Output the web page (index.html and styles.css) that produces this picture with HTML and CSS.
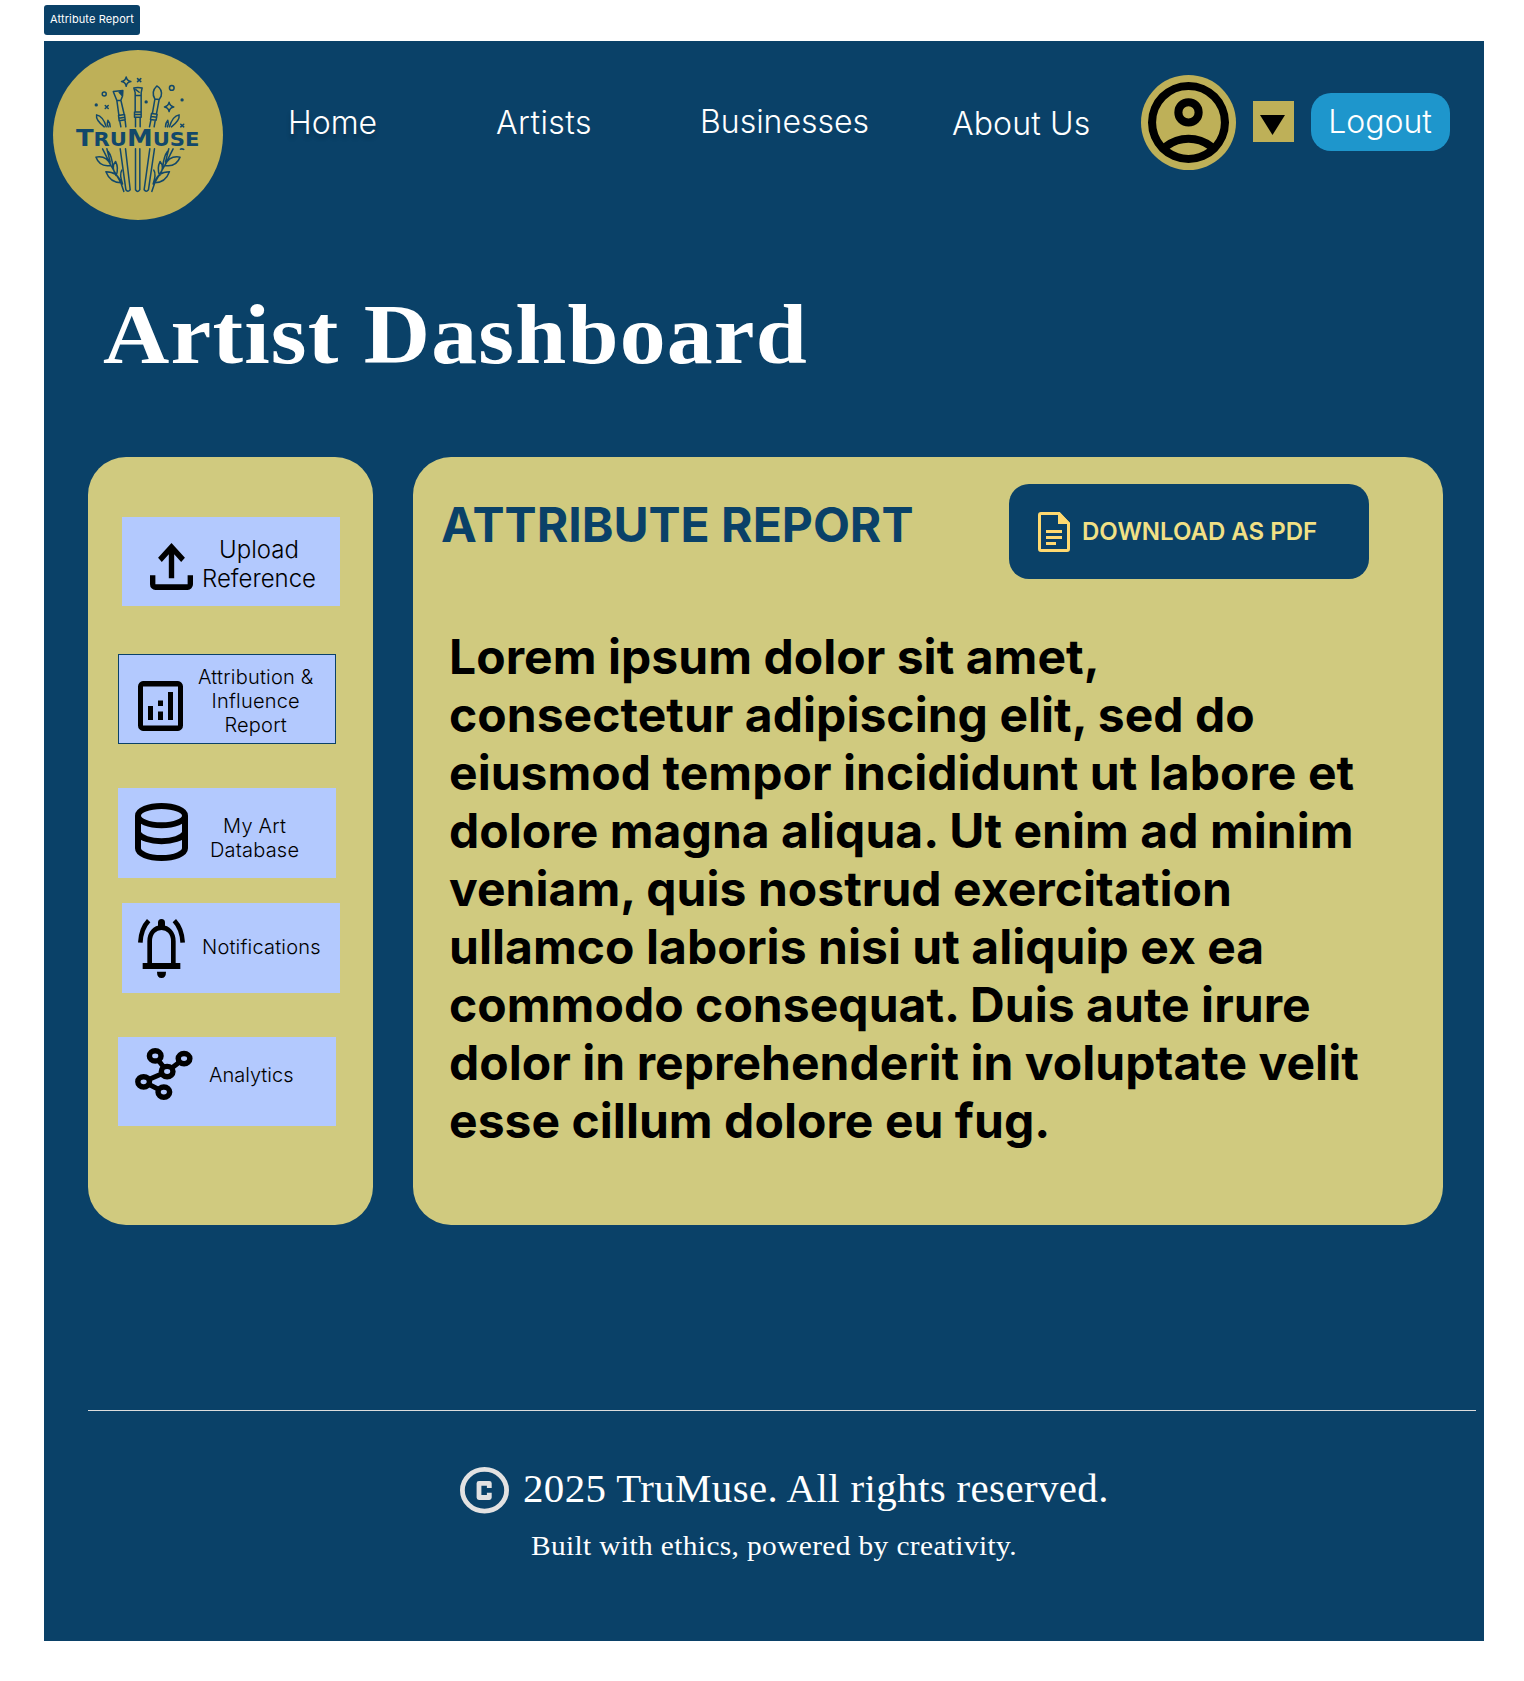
FILE: index.html
```html
<!DOCTYPE html>
<html lang="en">
<head>
<meta charset="utf-8">
<title>TruMuse – Artist Dashboard</title>
<link rel="stylesheet" href="styles.css">
</head>
<body>
<div class="tag">Attribute Report</div>
<div class="page">
  <header class="header">
    <svg class="logo" viewBox="69 149 511 511" role="img" aria-label="TruMuse">
      <circle cx="324.5" cy="404.500" r="255.500" fill="#beb058"/>
      <g fill="none" stroke="#12486a" stroke-width="4.500" stroke-linejoin="round" stroke-linecap="round">
        <!-- stars, dots and crosses -->
        <path d="M289 230q2 12 14 14q-12 2-14 14q-2-12-14-14q12-2 14-14zM418 306q2 12 14 14q-12 2-14 14q-2-12-14-14q12-2 14-14z"/>
        <path d="M323 235l10 9m0-9l-10 9M226 316l9 9m0-9l-9 9M453 372l9 8m0-8l-9 8M452 447q5-2 10 1"/>
        <circle cx="223" cy="281" r="6"/><circle cx="426" cy="263" r="7"/>
        <g fill="#12486a" stroke="none"><circle cx="199" cy="314" r="5"/><circle cx="349" cy="305" r="5"/><circle cx="457" cy="299" r="5"/></g>
        <!-- flat brush -->
        <path d="M250 274l29-3l-1 16l-5 13l-12 1zM261 301l6 44m6-45l10 43M266 346l18-3l2 16l-18 3zM267 354l18-3M270 364l3 16m13-18l2 18"/>
        <path d="M268 276l8-3v12z" fill="#12486a"/>
        <!-- square brush -->
        <path d="M312 263q12-3 25 0l-3 14v9h-18v-9zM316 286v49m18-49v49M314 335h20v16h-20zM314 343h20M317 353v27m14-27v27M318 268l10 8"/>
        <!-- round brush -->
        <path d="M375 296q-12-22 6-39q18 10 13 31l-6 10zM375 298l-7 41m20-41l-8 43M365 340l17 2l-3 18l-17-2zM364 349l17 2M363 361l-4 19m17-18l-3 18"/>
        <!-- handles -->
        <path d="M271 446l17 123q6 9 13 0l-14-123M317 446v123q7 10 13 0v-123M360 446l-17 123q6 9 13 0l18-123"/>
        <!-- left sprig -->
        <path d="M241 380q-1-14-7-20q-4 10 1 20M223 380q-26-20-23-36q20 4 29 36M218 446l25 50l30 52l9 26M231 446l10 40M243 496q-34 6-45-25q32-6 45 25zM249 500q-3-32-14-46M258 526q-15-26-1-42q10 20 2 42M273 548q-32 0-45-33q36 0 45 33zM278 552q-10-30-2-42"/>
        <!-- right sprig -->
        <path d="M407 380q1-14 7-20q4 10-1 20M425 380q26-20 23-36q-20 4-29 36M430 446l-25 50l-30 52l-9 26M417 446l-10 40M405 496q34 6 46-25q-32-6-46 25zM399 500q3-32 14-46M390 526q15-26 1-42q-10 20-2 42M375 548q32 0 44-33q-36 0-44 33zM370 552q10-30 2-42"/>
      </g>
      <text class="logo-text" x="138" y="437" textLength="371" lengthAdjust="spacingAndGlyphs"><tspan font-size="71">T</tspan><tspan font-size="58">RU</tspan><tspan font-size="71">M</tspan><tspan font-size="58">USE</tspan></text>
    </svg>
    <nav class="nav">
      <a class="nav-home">Home</a>
      <a class="nav-artists">Artists</a>
      <a class="nav-business">Businesses</a>
      <a class="nav-about">About Us</a>
    </nav>
    <div class="avatar">
      <svg viewBox="2 2 20 20"><path d="M5.850 17.100q1.275-.975 2.850-1.538T12 15t3.300.563t2.850 1.537q.875-1.025 1.363-2.325T20 12q0-3.325-2.337-5.663T12 4T6.337 6.338T4 12q0 1.475.488 2.775T5.850 17.100M12 13q-1.475 0-2.488-1.012T8.500 9.500t1.013-2.488T12 6t2.488 1.013T15.500 9.500t-1.012 2.488T12 13m0 9q-2.075 0-3.900-.788t-3.175-2.137T2.788 15.900T2 12t.788-3.900t2.137-3.175T8.100 2.788T12 2t3.900.788t3.175 2.137T21.213 8.100T22 12t-.788 3.900t-2.137 3.175t-3.175 2.138T12 22m0-2q1.325 0 2.500-.387t2.150-1.113q-.975-.725-2.150-1.112T12 17t-2.500.388T7.350 18.500q.975.725 2.150 1.113T12 20m0-9q.650 0 1.075-.425T13.500 9.500t-.425-1.075T12 8t-1.075.425T10.500 9.500t.425 1.075T12 11"/></svg>
    </div>
    <div class="caret"><svg viewBox="0 0 25 20"><path d="M0 0h25L12.500 20z"/></svg></div>
    <button class="logout">Logout</button>
  </header>

  <h1 class="title">Artist Dashboard</h1>

  <main class="columns">
    <aside class="sidebar">
      <a class="item item-upload">
        <svg class="ico-upload" viewBox="4 4 16 16" preserveAspectRatio="none"><path d="M11 16V7.850l-2.600 2.600L7 9l5-5l5 5l-1.400 1.450l-2.600-2.600V16zm-5 4q-.825 0-1.412-.587T4 18v-3h2v3h12v-3h2v3q0 .825-.587 1.413T18 20z"/></svg>
        <span>Upload<br>Reference</span>
      </a>
      <a class="item item-report">
        <svg class="ico-report" viewBox="3 3 18 18" preserveAspectRatio="none"><path d="M7 17h2v-5H7zm8 0h2V7h-2zm-4 0h2v-3h-2zm0-5h2v-2h-2zm-6 9q-.825 0-1.412-.587T3 19V5q0-.825.588-1.412T5 3h14q.825 0 1.413.588T21 5v14q0 .825-.587 1.413T19 21zm0-2h14V5H5z"/></svg>
        <span>Attribution &amp;<br>Influence<br>Report</span>
      </a>
      <a class="item item-db">
        <svg class="ico-db" viewBox="165 99 159 174"><g fill="none" stroke="#000" stroke-width="18"><ellipse cx="244.500" cy="137" rx="70.500" ry="29"/><path d="M174 137v98c0 16 31 29 70.500 29s70.500-13 70.500-29v-98M174 189c8 15 37 25 70.500 25s62.500-10 70.500-25"/></g></svg>
        <span>My Art<br>Database</span>
      </a>
      <a class="item item-notif">
        <svg class="ico-bell" viewBox="174 447 141 177"><g fill="none" stroke="#000" stroke-width="14"><path d="M181 518q2-42 25-66M308 518q-2-42-25-66M209 582v-68c0-26 16-41 35.500-41s35.500 15 35.500 41v68"/></g><path d="M188 579h113v18H188zM234 475v-17q0-11 10.500-11t10.500 11v17zM231 605h27q0 19-13.500 19t-13.500-19z"/></svg>
        <span>Notifications</span>
      </a>
      <a class="item item-analytics">
        <svg class="ico-hub" viewBox="165 833 175 157"><path d="M226 858l36 46l51-39M252 966l-61-31l71-31" fill="none" stroke="#000" stroke-width="15"/><g fill="#b3c9fe" stroke="#000" stroke-width="16.500"><ellipse cx="226" cy="857" rx="17.500" ry="15.500"/><ellipse cx="313" cy="865" rx="17.500" ry="15.500"/><ellipse cx="262" cy="904" rx="17.500" ry="15.500"/><ellipse cx="191" cy="935" rx="17.500" ry="15.500"/><ellipse cx="252" cy="966" rx="17.500" ry="15.500"/></g></svg>
        <span>Analytics</span>
      </a>
    </aside>

    <section class="report">
      <div class="report-head">
        <h2>ATTRIBUTE REPORT</h2>
        <button class="download">
          <svg viewBox="0 0 32 40"><path d="M20 1.500H3q-1.500 0-1.500 1.500v34q0 1.500 1.500 1.500h26q1.500 0 1.500-1.500V11.500L21 1.500z" fill="none" stroke="#ffd970" stroke-width="3"/><path d="M20 0h1.500L32 11v1H20zM8 18h16v3H8zM8 24h16v3H8zM8 30h10v3H8z" fill="#ffd970"/></svg>
          <span>DOWNLOAD AS PDF</span>
        </button>
      </div>
      <p>Lorem ipsum dolor sit amet, consectetur adipiscing elit, sed do eiusmod tempor incididunt ut labore et dolore magna aliqua. Ut enim ad minim veniam, quis nostrud exercitation ullamco laboris nisi ut aliquip ex ea commodo consequat. Duis aute irure dolor in reprehenderit in voluptate velit esse cillum dolore eu fug.</p>
    </section>
  </main>

  <footer class="footer">
    <div class="copyright">
      <svg viewBox="0 0 49 46.500"><g fill="none" stroke="#e3e2e2" stroke-width="4.800"><ellipse cx="24.500" cy="23.250" rx="22.100" ry="20.850"/><path d="M29.300 21v-4.700H19V30.500h10.300v-4.800" stroke-linejoin="round"/></g></svg>
      <span>2025 TruMuse. All rights reserved.</span>
    </div>
    <div class="motto"><span>Built with ethics, powered by creativity.</span></div>
  </footer>
</div>
</body>
</html>
```
FILE: styles.css
```css
* { box-sizing: border-box; }
body {
  margin: 0;
  padding: 5px 40px 40px 44px;
  background: #fff;
  font-family: Inter, "Liberation Sans", sans-serif;
  color: #000;
}
svg { display: block; flex: none; }
h1, h2, p { margin: 0; }
button { border: 0; padding: 0; font-family: inherit; }

.tag {
  width: 95.5px;
  height: 30px;
  padding-left: 6px;
  border-radius: 3px;
  background: #0a4168;
  color: #fff;
  font-size: 11px;
  line-height: 28px;
  letter-spacing: .12px;
  white-space: nowrap;
}
.page {
  width: 1440px;
  height: 1600px;
  margin-top: 6px;
  background: #0a4168;
  overflow: hidden;
}

/* header */
.header {
  display: flex;
  align-items: flex-start;
  height: 243px;
  padding: 9px 0 0 9px;
  font-size: 32px;
  font-weight: 300;
  line-height: 39px;
  color: #fff;
}
.logo { width: 170px; height: 170px; }
.logo-text { font-family: "DejaVu Sans", sans-serif; font-weight: 700; fill: #12486a; }
.nav { display: flex; width: 918px; padding: 52px 0 0 65px; white-space: nowrap; }
.nav-home { width: 208px; padding-top: 1px; text-shadow: 0 4px 4px rgba(0, 0, 0, .25); }
.nav-artists { width: 204px; padding-top: 1px; letter-spacing: .45px; }
.nav-business { width: 252px; }
.nav-about { padding-top: 2px; letter-spacing: .15px; }
.avatar {
  display: grid;
  place-items: center;
  width: 95px;
  height: 95px;
  margin-top: 25px;
  border-radius: 50%;
  background: #beb058;
}
.avatar svg { width: 81px; height: 81px; }
.caret {
  display: grid;
  place-items: center;
  width: 41px;
  height: 41px;
  margin: 51px 17px 0;
  padding: 6px 2px 0 0;
  background: #beb058;
}
.caret svg { width: 25px; height: 20px; }
.logout {
  width: 139px;
  height: 58px;
  margin-top: 43px;
  padding: 0 1px 1px 0;
  border-radius: 20px;
  background: #1e96cc;
  color: #fff;
  font-size: 32px;
  font-weight: 300;
}

.title {
  padding-left: 59px;
  color: #fff;
  font: 700 85px/100px "Liberation Serif", serif;
  letter-spacing: 1.1px;
  white-space: nowrap;
  transform: scaleX(1.08);
  transform-origin: 59px 0;
}

/* dashboard columns */
.columns {
  display: flex;
  gap: 40px;
  height: 768px;
  margin: 73px 0 0 44px;
}
.sidebar, .report {
  border-radius: 38px;
  background: #d0ca7f;
}
.sidebar {
  display: flex;
  flex-direction: column;
  width: 285px;
  padding: 60px 0 0 30px;
}
.item {
  display: flex;
  align-items: flex-start;
  width: 218px;
  height: 89px;
  background: #b3c9fe;
  font-size: 20px;
  font-weight: 300;
  line-height: 24px;
  letter-spacing: .2px;
  text-align: center;
  white-space: nowrap;
}
.item-upload { margin-left: 4px; padding: 26px 0 0 28px; font-size: 24px; line-height: 29px; letter-spacing: 0; }
.item-upload span { margin: -8px 0 0 9px; }
.ico-upload { width: 43px; height: 47px; }
.item-report { height: 90px; margin-top: 48px; padding: 26px 0 0 19px; border: 1px solid #0a4168; }
.item-report span { margin: -16px 0 0 15px; }
.ico-report { width: 45px; height: 50px; }
.item-db { height: 90px; margin-top: 44px; padding: 15px 0 0 17px; }
.item-db span { margin: 11px 0 0 22px; }
.ico-db { width: 53px; height: 58px; }
.item-notif { height: 90px; margin: 25px 0 0 4px; padding: 16px 0 0 16px; }
.item-notif span { margin: 16px 0 0 17px; }
.ico-bell { width: 47px; height: 59px; }
.item-analytics { margin-top: 44px; padding: 11px 0 0 17px; letter-spacing: 0; }
.item-analytics span { margin: 15px 0 0 16px; }
.ico-hub { width: 58px; height: 52px; }

.report { width: 1030px; padding: 27px 74px 0 28px; }
.report-head { display: flex; justify-content: space-between; height: 95px; }
.report h2 {
  padding-top: 12px;
  color: #0a4168;
  font-size: 48px;
  font-weight: 700;
  line-height: 58px;
}
.download {
  display: flex;
  align-items: center;
  gap: 12px;
  width: 360px;
  height: 95px;
  padding-left: 29px;
  border-radius: 20px;
  background: #0a4168;
  color: #f1e085;
  font-size: 24px;
  font-weight: 600;
}
.download svg { width: 32px; height: 40px; }
.report p {
  width: 930px;
  padding: 49px 0 0 8px;
  font-size: 48px;
  font-weight: 700;
  line-height: 58px;
  letter-spacing: .04px;
}

/* footer */
.footer {
  width: 1388px;
  margin: 185px 0 0 44px;
  padding: 56px 0 0 372px;
  border-top: 1px solid #ddd;
  color: #fff;
  font-family: "Liberation Serif", serif;
  white-space: nowrap;
}
.copyright {
  display: flex;
  gap: 14px;
  font-size: 39px;
  line-height: 44px;
  letter-spacing: .35px;
}
.copyright svg { width: 49px; height: 46.5px; }
.copyright span, .motto span {
  display: inline-block;
  transform: scaleX(1.05);
  transform-origin: 0 0;
}
.motto { padding: 16px 0 0 71px; font-size: 28px; line-height: 32px; letter-spacing: .35px; }
```
